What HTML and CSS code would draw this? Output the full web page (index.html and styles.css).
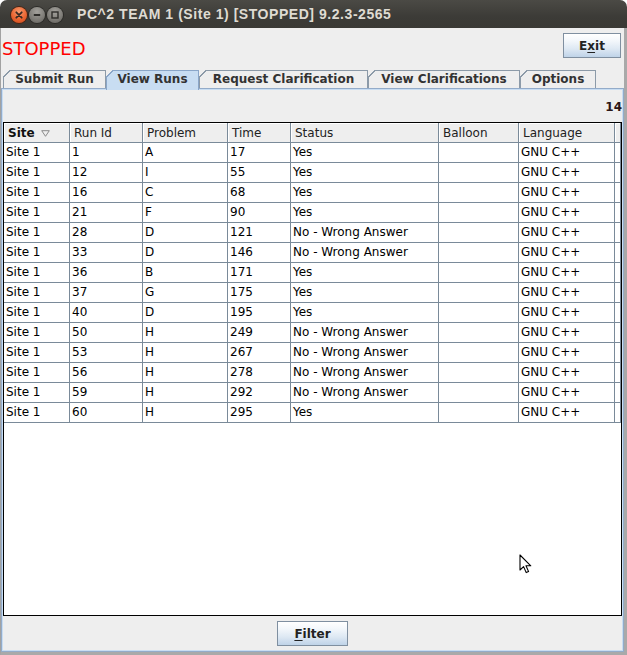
FILE: index.html
```html
<!DOCTYPE html>
<html lang="en">
<head>
    <meta charset="UTF-8">
    <title>PC^2 TEAM 1 (Site 1) [STOPPED] 9.2.3-2565</title>
    <link rel="stylesheet" href="styles.css">
</head>
<body>
    <div class="window">
        <div class="titlebar">
            <div class="wbtns">
                <span class="wbtn close">
                    <svg width="16" height="16" viewBox="0 0 16 16"><path d="M5.3 5.3 L10.7 10.7 M10.7 5.3 L5.3 10.7" stroke="#3a2a22" stroke-width="1.8" stroke-linecap="round"/></svg>
                </span>
                <span class="wbtn">
                    <svg width="16" height="16" viewBox="0 0 16 16"><path d="M4.8 8 L11.2 8" stroke="#2e2d2a" stroke-width="1.8"/></svg>
                </span>
                <span class="wbtn">
                    <svg width="16" height="16" viewBox="0 0 16 16"><rect x="5" y="5" width="6" height="6" fill="none" stroke="#2e2d2a" stroke-width="1.4"/></svg>
                </span>
            </div>
            <div class="wtitle">PC^2 TEAM 1 (Site 1) [STOPPED] 9.2.3-2565</div>
        </div>

        <div class="main">
            <div class="topbar">
                <span class="state">STOPPED</span>
                <button class="jbtn exit">E<u>x</u>it</button>
            </div>

            <div class="tabs">
                <div class="tab t-submit">Submit Run</div>
                <div class="tab t-runs sel">View Runs</div>
                <div class="tab t-req">Request Clarification</div>
                <div class="tab t-clar">View Clarifications</div>
                <div class="tab t-opt">Options</div>
            </div>

            <div class="panel">
                <div class="count">14</div>
                <div class="scroll">
                    <table class="runs">
                        <thead>
                            <tr>
                                <th class="c-site">Site <svg class="sort" width="9" height="7" viewBox="0 0 9 7"><path d="M0.7 0.7 L8.3 0.7 L4.5 6.3 Z" fill="none" stroke="#8a8a8a" stroke-width="1"/></svg></th>
                                <th class="c-id">Run Id</th>
                                <th class="c-prob">Problem</th>
                                <th class="c-time">Time</th>
                                <th class="c-status">Status</th>
                                <th class="c-ball">Balloon</th>
                                <th class="c-lang">Language</th>
                                <th class="c-end"></th>
                            </tr>
                        </thead>
                        <tbody>
                            <tr><td>Site 1</td><td>1</td><td>A</td><td>17</td><td>Yes</td><td></td><td>GNU C++</td><td></td></tr>
                            <tr><td>Site 1</td><td>12</td><td>I</td><td>55</td><td>Yes</td><td></td><td>GNU C++</td><td></td></tr>
                            <tr><td>Site 1</td><td>16</td><td>C</td><td>68</td><td>Yes</td><td></td><td>GNU C++</td><td></td></tr>
                            <tr><td>Site 1</td><td>21</td><td>F</td><td>90</td><td>Yes</td><td></td><td>GNU C++</td><td></td></tr>
                            <tr><td>Site 1</td><td>28</td><td>D</td><td>121</td><td>No - Wrong Answer</td><td></td><td>GNU C++</td><td></td></tr>
                            <tr><td>Site 1</td><td>33</td><td>D</td><td>146</td><td>No - Wrong Answer</td><td></td><td>GNU C++</td><td></td></tr>
                            <tr><td>Site 1</td><td>36</td><td>B</td><td>171</td><td>Yes</td><td></td><td>GNU C++</td><td></td></tr>
                            <tr><td>Site 1</td><td>37</td><td>G</td><td>175</td><td>Yes</td><td></td><td>GNU C++</td><td></td></tr>
                            <tr><td>Site 1</td><td>40</td><td>D</td><td>195</td><td>Yes</td><td></td><td>GNU C++</td><td></td></tr>
                            <tr><td>Site 1</td><td>50</td><td>H</td><td>249</td><td>No - Wrong Answer</td><td></td><td>GNU C++</td><td></td></tr>
                            <tr><td>Site 1</td><td>53</td><td>H</td><td>267</td><td>No - Wrong Answer</td><td></td><td>GNU C++</td><td></td></tr>
                            <tr><td>Site 1</td><td>56</td><td>H</td><td>278</td><td>No - Wrong Answer</td><td></td><td>GNU C++</td><td></td></tr>
                            <tr><td>Site 1</td><td>59</td><td>H</td><td>292</td><td>No - Wrong Answer</td><td></td><td>GNU C++</td><td></td></tr>
                            <tr><td>Site 1</td><td>60</td><td>H</td><td>295</td><td>Yes</td><td></td><td>GNU C++</td><td></td></tr>
                        </tbody>
                    </table>
                </div>
                <div class="actions">
                    <button class="jbtn filter"><u>F</u>ilter</button>
                </div>
            </div>
        </div>

        <svg class="cursor" width="13" height="20" viewBox="0 0 13 20"><path d="M1 1 L1 16 L4.6 12.6 L7.2 18.6 L9.6 17.6 L7 11.8 L11.8 11.8 Z" fill="#fff" stroke="#000" stroke-width="1.1" stroke-linejoin="round"/></svg>
    </div>
</body>
</html>
```

FILE: styles.css
```css
* { box-sizing: border-box; }
html, body {
    margin: 0;
    padding: 0;
    background: #ffffff;
}
body {
    font-family: "DejaVu Sans", sans-serif;
    font-size: 12px;
    color: #000;
}
.window {
    width: 627px;
    height: 655px;
    display: flex;
    flex-direction: column;
    background: #eeeeee;
    border-radius: 7px 7px 0 0;
    overflow: hidden;
    position: relative;
}

/* title bar */
.titlebar {
    height: 28px;
    flex: none;
    display: flex;
    align-items: center;
    background: linear-gradient(#4b4a45, #3c3b37 60%, #3a3935);
}
.wbtns {
    display: flex;
    gap: 2px;
    width: 77px;
    padding-left: 11px;
    padding-top: 1px;
}
.wbtn {
    width: 16px;
    height: 16px;
    border-radius: 50%;
    display: flex;
    background: radial-gradient(circle at 50% 30%, #a3a19c, #7c7a75 60%, #605e5a);
    box-shadow: 0 0 0 1px #2c2b28;
}
.wbtn.close {
    background: radial-gradient(circle at 50% 30%, #f79a6e, #ea6430 55%, #c8461a);
    box-shadow: 0 0 0 1px #4a2412;
}
.wtitle {
    font-family: "Liberation Sans", sans-serif;
    font-weight: bold;
    font-size: 14px;
    color: #dfdbd2;
    letter-spacing: 0.55px;
}

/* window body */
.main {
    flex: 1;
    min-height: 0;
    display: flex;
    flex-direction: column;
    border-left: 1px solid #a2a2a2;
    border-right: 3px solid #a9a9a9;
    border-bottom: 3px solid #a9a9a9;
}
.topbar {
    height: 42px;
    flex: none;
    display: flex;
    justify-content: space-between;
    align-items: flex-start;
    padding: 5px 3px 0 1px;
}
.state {
    color: #ff0000;
    font-size: 18px;
    line-height: 21px;
    margin-top: 5px;
}
.jbtn {
    font-family: "DejaVu Sans", sans-serif;
    font-size: 12px;
    font-weight: bold;
    color: #222;
    height: 25px;
    padding: 0;
    border: 1px solid #7f8fa0;
    border-radius: 0;
    background: linear-gradient(#ffffff 0%, #f3f7fb 30%, #dde8f3 65%, #bfd3e8 100%);
    box-shadow: inset 0 1px 0 #fff;
}
.jbtn u { text-decoration-thickness: 1px; text-underline-offset: 2px; }
.exit { width: 58px; }
.filter { width: 71px; }

/* tabs */
.tabs {
    height: 18px;
    flex: none;
    display: flex;
    align-items: flex-start;
    padding-left: 2px;
}
.tab {
    position: relative;
    height: 18px;
    border: 1px solid #8c9aa8;
    border-bottom: none;
    font-weight: bold;
    color: #333;
    text-align: center;
    line-height: 17px;
    white-space: nowrap;
}
.tab::before {
    content: "";
    position: absolute;
    top: -1px;
    left: -1px;
    width: 7px;
    height: 7px;
    background: linear-gradient(to bottom right, #eeeeee 46%, #8c9aa8 46%, #8c9aa8 60%, transparent 60%);
}
.tab.sel {
    height: 20px;
    margin-bottom: -2px;
    z-index: 1;
    background: #c8ddf2;
    border-color: #8aa6c8;
}
.tab.sel::before {
    background: linear-gradient(to bottom right, #eeeeee 46%, #8aa6c8 46%, #8aa6c8 60%, transparent 60%);
}
.t-submit { width: 103px; }
.t-runs { width: 93px; }
.t-req { width: 169px; }
.t-clar { width: 152px; }
.t-opt { width: 76px; }

/* tab content */
.panel {
    flex: 1;
    min-height: 0;
    display: flex;
    flex-direction: column;
    border: 1px solid #93abc9;
    padding: 1px;
    box-shadow: inset 0 0 0 1px #c8ddf2;
}
.count {
    height: 32px;
    flex: none;
    padding-top: 10px;
    line-height: 14px;
    text-align: right;
    font-weight: bold;
    color: #2b1616;
}
.scroll {
    flex: 1;
    min-height: 0;
    border: 1px solid #000;
    background: #fff;
}
.actions {
    height: 34px;
    flex: none;
    display: flex;
    justify-content: center;
    padding-top: 5px;
}

/* table */
.runs {
    width: 617px;
    table-layout: fixed;
    border-collapse: separate;
    border-spacing: 0;
}
.runs th, .runs td {
    height: 20px;
    padding: 0 0 0 2px;
    border-right: 1px solid #7a8a99;
    border-bottom: 1px solid #7a8a99;
    text-align: left;
    font-weight: normal;
    line-height: 19px;
    white-space: nowrap;
    overflow: hidden;
}
.runs th {
    background: #eeeeee;
    color: #222;
    padding-left: 4px;
    padding-top: 1px;
    line-height: 18px;
    box-shadow: inset 1px 1px 0 #ffffff;
}
.runs th.c-site { font-weight: bold; color: #111; }
.sort { margin-left: 2px; vertical-align: 0; }
.c-site { width: 66px; }
.c-id { width: 73px; }
.c-prob { width: 85px; }
.c-time { width: 63px; }
.c-status { width: 148px; }
.c-ball { width: 80px; }
.c-lang { width: 96px; }
.c-end { width: 6px; }

.cursor {
    position: absolute;
    left: 519px;
    top: 554px;
}
```
